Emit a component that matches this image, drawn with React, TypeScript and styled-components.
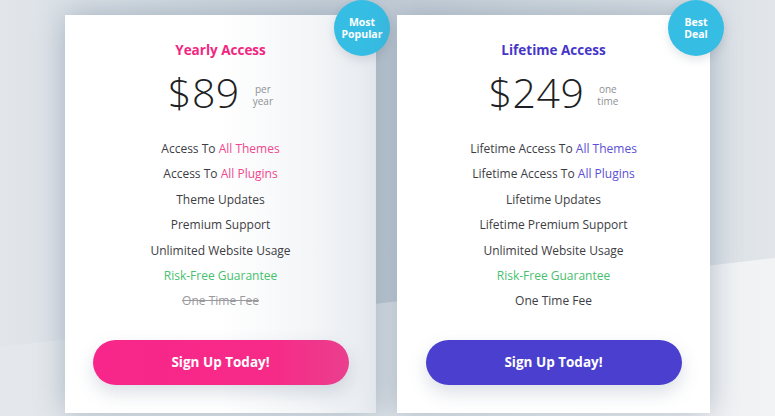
import React from "react";
import styled, { createGlobalStyle } from "styled-components";

const Global = createGlobalStyle`
  html, body { margin: 0; padding: 0; }
  body {
    width: 775px;
    height: 416px;
    overflow: hidden;
    font-family: "Open Sans", "Liberation Sans", sans-serif;
  }
`;

const Stage = styled.div`
  position: relative;
  width: 775px;
  height: 416px;
  overflow: hidden;
  background: linear-gradient(to right, #e2e6eb 0%, #d3dbe2 20%, #c3cdd7 49%, #d0d8df 70%, #d9dfe5 90%, #e2e6ea 100%);
  &::before {
    content: "";
    position: absolute;
    inset: 0;
    background: linear-gradient(to right, #e4e8ec 0%, #dfe4e9 49%, #eceff2 75%, #f2f3f5 100%);
    clip-path: polygon(0 347px, 100% 258px, 100% 100%, 0 100%);
  }
`;

const Row = styled.div`
  position: relative;
  display: flex;
  gap: 21px;
  padding: 15px 0 0 65px;
`;

const Card = styled.div<{ $tint?: boolean; $w: number }>`
  position: relative;
  width: ${(p) => p.$w}px;
  height: 398px;
  box-sizing: border-box;
  display: flex;
  flex-direction: column;
  align-items: center;
  padding-top: 24px;
  background: ${(p) =>
    p.$tint ? "linear-gradient(to right, #ffffff 50%, #f3f5f7 80%, #e6eaef 100%)" : "#ffffff"};
  box-shadow: 0 0 28px rgba(100, 122, 145, 0.45);
`;

const Badge = styled.div`
  position: absolute;
  top: -15px;
  right: -14px;
  width: 56px;
  height: 56px;
  border-radius: 50%;
  background: #36bde4;
  color: #fff;
  display: flex;
  align-items: center;
  justify-content: center;
  text-align: center;
  font-family: "Open Sans", sans-serif;
  font-weight: 700;
  font-size: 10.5px;
  line-height: 12.5px;
  box-shadow: 0 4px 10px rgba(60, 80, 100, 0.15);
`;

const Title = styled.div<{ $color: string }>`
  color: ${(p) => p.$color};
  font-size: 13.5px;
  font-weight: 700;
  line-height: 22px;
`;

const PriceRow = styled.div`
  margin-top: 8px;
  display: flex;
  align-items: center;
  gap: 13px;
`;

const Amount = styled.div`
  font-size: 41px;
  font-weight: 300;
  line-height: 46px;
  color: #1d1f24;
  letter-spacing: 0.5px;
`;

const Period = styled.div`
  font-size: 10px;
  line-height: 12.5px;
  color: #8e9196;
  text-align: center;
  margin-top: 6px;
`;

const Features = styled.ul`
  list-style: none;
  margin: 21px 0 0;
  padding: 0;
  text-align: center;
`;

const Feature = styled.li<{ $tone?: "green" | "struck" }>`
  font-size: 12px;
  line-height: 25.4px;
  color: ${(p) => (p.$tone === "green" ? "#47c06e" : p.$tone === "struck" ? "#9a9a9e" : "#3d3d44")};
  text-decoration: ${(p) => (p.$tone === "struck" ? "line-through" : "none")};
  white-space: nowrap;
`;

const Accent = styled.span<{ $color: string }>`
  color: ${(p) => p.$color};
`;

const Button = styled.button<{ $bg: string }>`
  margin-top: 26px;
  width: 256px;
  height: 45px;
  border: none;
  border-radius: 23px;
  background: ${(p) => p.$bg};
  color: #fff;
  font-family: "Open Sans", sans-serif;
  font-size: 13.5px;
  font-weight: 700;
  box-shadow: 0 8px 18px rgba(90, 110, 140, 0.22);
  cursor: pointer;
`;

type Plan = {
  badge: [string, string];
  title: string;
  color: string;
  accent: string;
  amount: string;
  period: [string, string];
  features: { pre: string; accent?: string; tone?: "green" | "struck" }[];
  button: string;
  tint?: boolean;
  w: number;
};

const plans: Plan[] = [
  {
    badge: ["Most", "Popular"],
    title: "Yearly Access",
    color: "#f2257f",
    accent: "#f0478f",
    amount: "$89",
    period: ["per", "year"],
    features: [
      { pre: "Access To ", accent: "All Themes" },
      { pre: "Access To ", accent: "All Plugins" },
      { pre: "Theme Updates" },
      { pre: "Premium Support" },
      { pre: "Unlimited Website Usage" },
      { pre: "Risk-Free Guarantee", tone: "green" },
      { pre: "One Time Fee", tone: "struck" },
    ],
    button: "linear-gradient(to right, #f8268a 0%, #f72a88 70%, #ea3f8e 100%)",
    tint: true,
    w: 311,
  },
  {
    badge: ["Best", "Deal"],
    title: "Lifetime Access",
    color: "#4536c8",
    accent: "#5b50d6",
    amount: "$249",
    period: ["one", "time"],
    features: [
      { pre: "Lifetime Access To ", accent: "All Themes" },
      { pre: "Lifetime Access To ", accent: "All Plugins" },
      { pre: "Lifetime Updates" },
      { pre: "Lifetime Premium Support" },
      { pre: "Unlimited Website Usage" },
      { pre: "Risk-Free Guarantee", tone: "green" },
      { pre: "One Time Fee" },
    ],
    button: "#4a3fcf",
    w: 313,
  },
];

export default function App() {
  return (
    <>
      <Global />
      <Stage>
        <Row>
          {plans.map((p) => (
            <Card key={p.title} $tint={p.tint} $w={p.w}>
              <Badge>
                {p.badge[0]}
                <br />
                {p.badge[1]}
              </Badge>
              <Title $color={p.color}>{p.title}</Title>
              <PriceRow>
                <Amount>{p.amount}</Amount>
                <Period>
                  {p.period[0]}
                  <br />
                  {p.period[1]}
                </Period>
              </PriceRow>
              <Features>
                {p.features.map((f, i) => (
                  <Feature key={i} $tone={f.tone}>
                    {f.pre}
                    {f.accent && <Accent $color={p.accent}>{f.accent}</Accent>}
                  </Feature>
                ))}
              </Features>
              <Button $bg={p.button}>Sign Up Today!</Button>
            </Card>
          ))}
        </Row>
      </Stage>
    </>
  );
}
